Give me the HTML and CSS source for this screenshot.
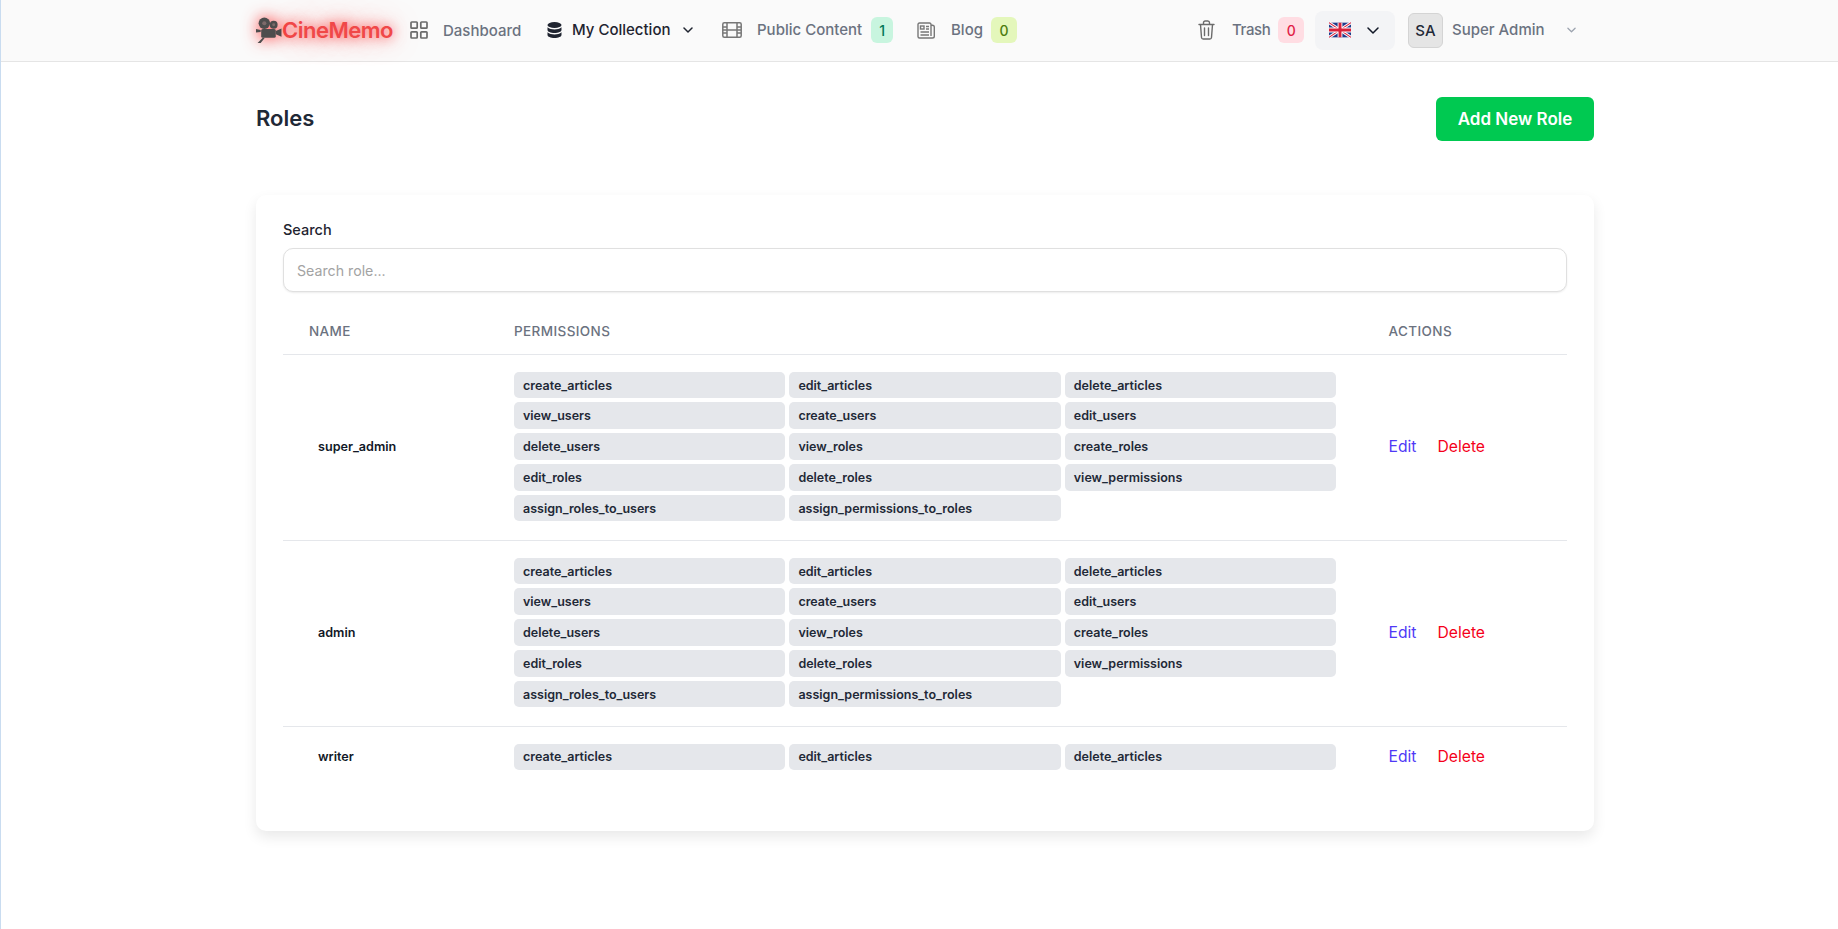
FILE: index.html
```html
<!DOCTYPE html>
<html lang="en">
<head>
<meta charset="utf-8">
<title>Roles - CineMemo</title>
<link rel="stylesheet" href="styles.css">
</head>
<body>
<header class="topbar">
  <nav class="nav">
    <a class="logo">
      <svg class="logo-icon" viewBox="0 0 25 25"><circle cx="8" cy="6" r="5.500" fill="#4d4d4d"/><circle cx="17" cy="7.500" r="3.800" fill="#4d4d4d"/><circle cx="8" cy="6" r="2" fill="#7d6a6a"/><circle cx="17" cy="7.500" r="1.400" fill="#7d6a6a"/><rect x="5" y="11.500" width="14" height="8.500" rx="1.500" fill="#4d4d4d"/><path d="M19 13.500l5.500-2.500v8l-5.500-2.500zM4.500 14.500v-2L0 11.500v3.500zM6.500 20L1.500 25h3l4-5z" fill="#4d4d4d"/></svg>
      <span class="logo-text">CineMemo</span>
    </a>
    <a class="item item-dash">
      <svg class="ic" width="18" height="18" viewBox="0 0 18 18" fill="none" stroke="#6b6b6b" stroke-width="1.700"><rect x="1" y="1" width="6.200" height="6.200" rx=".8"/><rect x="10.800" y="1" width="6.200" height="6.200" rx=".8"/><rect x="1" y="10.800" width="6.200" height="6.200" rx=".8"/><rect x="10.800" y="10.800" width="6.200" height="6.200" rx=".8"/></svg>
      <span class="lbl">Dashboard</span>
    </a>
    <a class="item item-coll">
      <svg class="ic" width="15" height="16" viewBox="0 0 15 16" fill="#1f2430"><ellipse cx="7.500" cy="3" rx="7" ry="3"/><path d="M.5 5.200C2 7 5 7.400 7.500 7.400S13 7 14.500 5.200V8c0 1.600-3.100 3-7 3s-7-1.400-7-3z"/><path d="M.5 10.200C2 12 5 12.400 7.500 12.400s5.500-.4 7-2.200V13c0 1.600-3.100 3-7 3s-7-1.400-7-3z"/></svg>
      <span class="lbl lbl-dark">My Collection</span>
      <svg class="chev-s" width="10" height="6" viewBox="0 0 10 6" fill="none" stroke="#1f2430" stroke-width="1.500" stroke-linecap="round" stroke-linejoin="round"><path d="M1 1l4 4 4-4"/></svg>
    </a>
    <a class="item item-public">
      <svg class="ic" width="20" height="16" viewBox="0 0 20 16" fill="none" stroke="#777" stroke-width="1.500"><rect x=".8" y=".8" width="18.400" height="14.400" rx="1.500"/><path d="M5 1v14M15 1v14M1 5h4M1 8h18M1 11h4M15 5h4M15 11h4"/></svg>
      <span class="lbl">Public Content</span>
      <span class="badge badge-green">1</span>
    </a>
    <a class="item item-blog">
      <svg class="ic" width="18" height="17" viewBox="0 0 18 17" fill="none" stroke="#777" stroke-width="1.400"><path d="M14 3V2.500C14 1.500 13.500 1 12.500 1h-10C1.500 1 1 1.500 1 2.500v12C1 15.500 1.500 16 2.500 16h13c1 0 1.800-.8 1.800-1.800V5c0-1-.8-2-3.300-2v11"/><rect x="3.500" y="4" width="3.500" height="3"/><path d="M9 4.500h3M9 7h3M3.500 10h8.500M3.500 13h8.500"/></svg>
      <span class="lbl">Blog</span>
      <span class="badge badge-lime">0</span>
    </a>
    <a class="item item-trash">
      <svg class="ic" width="17" height="20" viewBox="0 0 17 20" fill="none" stroke="#6b6b6b" stroke-width="1.400" stroke-linecap="round" stroke-linejoin="round"><path d="M1 4.500h15M5.500 4.500V2.800C5.500 1.800 6.200 1 7.200 1h2.600c1 0 1.700.8 1.700 1.800v1.700M2.500 4.500l1 13c.1 1 .8 1.500 1.600 1.500h6.800c.8 0 1.500-.5 1.600-1.500l1-13M6.500 8v7.500M10.500 8v7.500"/></svg>
      <span class="lbl lbl-trash">Trash</span>
      <span class="badge badge-pink">0</span>
    </a>
    <button class="lang" type="button">
      <svg width="22" height="16" viewBox="0 0 60 40"><rect width="60" height="40" fill="#1f3a8a"/><path d="M0 0l60 40M60 0L0 40" stroke="#fff" stroke-width="8"/><path d="M0 0l60 40M60 0L0 40" stroke="#d8203a" stroke-width="3"/><path d="M30 0v40M0 20h60" stroke="#fff" stroke-width="13"/><path d="M30 0v40M0 20h60" stroke="#d8203a" stroke-width="8"/></svg>
      <svg width="12" height="7" viewBox="0 0 12 7" fill="none" stroke="#111827" stroke-width="1.500" stroke-linecap="round" stroke-linejoin="round"><path d="M1 1l5 5 5-5"/></svg>
    </button>
    <a class="user">
      <span class="avatar">SA</span>
      <span class="lbl">Super Admin</span>
      <svg class="chev-user" width="9" height="6" viewBox="0 0 10 6" fill="none" stroke="#9ca3af" stroke-width="1.400" stroke-linecap="round" stroke-linejoin="round"><path d="M1 1l4 4 4-4"/></svg>
    </a>
  </nav>
</header>
<main class="page">
  <div class="page-head">
    <h1 class="title">Roles</h1>
    <button class="add" type="button">Add New Role</button>
  </div>
  <section class="card">
    <label class="search-label" for="s">Search</label>
    <input class="search" id="s" type="text" placeholder="Search role...">
    <div class="thead">
      <div class="th th-name">NAME</div>
      <div class="th">PERMISSIONS</div>
      <div class="th">ACTIONS</div>
    </div>
    <div class="row">
      <div class="name">super_admin</div>
      <div class="perms">
        <span class="chip">create_articles</span><span class="chip">edit_articles</span><span class="chip">delete_articles</span>
        <span class="chip">view_users</span><span class="chip">create_users</span><span class="chip">edit_users</span>
        <span class="chip">delete_users</span><span class="chip">view_roles</span><span class="chip">create_roles</span>
        <span class="chip">edit_roles</span><span class="chip">delete_roles</span><span class="chip">view_permissions</span>
        <span class="chip">assign_roles_to_users</span><span class="chip">assign_permissions_to_roles</span>
      </div>
      <div class="actions"><a class="edit">Edit</a><a class="del">Delete</a></div>
    </div>
    <div class="row">
      <div class="name">admin</div>
      <div class="perms">
        <span class="chip">create_articles</span><span class="chip">edit_articles</span><span class="chip">delete_articles</span>
        <span class="chip">view_users</span><span class="chip">create_users</span><span class="chip">edit_users</span>
        <span class="chip">delete_users</span><span class="chip">view_roles</span><span class="chip">create_roles</span>
        <span class="chip">edit_roles</span><span class="chip">delete_roles</span><span class="chip">view_permissions</span>
        <span class="chip">assign_roles_to_users</span><span class="chip">assign_permissions_to_roles</span>
      </div>
      <div class="actions"><a class="edit">Edit</a><a class="del">Delete</a></div>
    </div>
    <div class="row row-last">
      <div class="name">writer</div>
      <div class="perms">
        <span class="chip">create_articles</span><span class="chip">edit_articles</span><span class="chip">delete_articles</span>
      </div>
      <div class="actions"><a class="edit">Edit</a><a class="del">Delete</a></div>
    </div>
  </section>
</main>
</body>
</html>
```
FILE: styles.css
```css
* { box-sizing: border-box; }
html, body { height: 100%; }
body {
  margin: 0;
  background: #fff;
  border-left: 1px solid #c9dcf0;
  font-family: Inter, "Liberation Sans", sans-serif;
  color: #1f2937;
  overflow: hidden;
}
a { display: flex; align-items: center; }
.topbar {
  height: 62px;
  background: #fafafa;
  border-bottom: 1px solid #e5e5e5;
}
.nav {
  width: 1338px;
  margin-left: 255px;
  height: 60px;
  display: flex;
  align-items: center;
}
.logo { width: 154px; margin-top: -1px; }
.logo-icon {
  width: 26px;
  height: 26px;
  flex: none;
  filter: drop-shadow(0 0 8px rgba(255, 30, 30, 0.9));
}
.logo-text {
  font-size: 22px;
  font-weight: 600;
  letter-spacing: -0.5px;
  color: #f04848;
  text-shadow: 0 0 12px rgba(255, 40, 40, 0.8), 0 0 26px rgba(255, 60, 60, 0.6);
}
.item { flex: none; font-size: 15px; }
.ic { flex: none; }
.lbl { color: #6b7280; font-size: 15px; font-weight: 500; white-space: nowrap; margin-top: -2px; }
.lbl-dark { color: #1f2430; }
.item-dash { width: 137px; }
.item-dash .lbl { margin-left: 15px; margin-top: 0; }
.item-coll { width: 175px; }
.item-coll .lbl { margin-left: 10px; }
.chev-s { margin-left: 13px; }
.item-public { width: 195px; }
.item-public .lbl { margin-left: 15px; }
.item-blog { width: 281px; }
.item-blog .lbl { margin-left: 16px; }
.item-trash { width: 117px; }
.item-trash .lbl { margin-left: 17px; }
.lbl-trash { letter-spacing: -0.4px; }
.badge {
  margin-left: 8px;
  width: 26px;
  height: 26px;
  border-radius: 6px;
  font-size: 14px;
  font-weight: 500;
  display: flex;
  align-items: center;
  justify-content: center;
}
.badge-green { background: #c8f5df; color: #047857; width: 22px; margin-left: 9px; }
.badge-lime { background: #e4f7bb; color: #4d7c0f; }
.badge-pink { background: #ffdde3; color: #e11d48; }
.lang {
  width: 80px;
  height: 39px;
  border: 0;
  border-radius: 8px;
  background: #f3f4f6;
  padding: 0 16px 0 14px;
  display: flex;
  align-items: center;
  justify-content: space-between;
}
.user { margin-left: 13px; }
.avatar {
  width: 35px;
  height: 35px;
  border: 1px solid #d4d4d4;
  border-radius: 6px;
  background: #e5e5e5;
  color: #1f2937;
  font-size: 15px;
  font-weight: 500;
  display: flex;
  align-items: center;
  justify-content: center;
}
.user .lbl { margin-left: 9px; }
.chev-user { margin-left: 22px; }
.page { width: 1338px; margin-left: 255px; }
.page-head {
  margin-top: 35px;
  height: 44px;
  display: flex;
  align-items: center;
  justify-content: space-between;
}
.title { margin: -2px 0 0; font-size: 22px; font-weight: 600; color: #1f2937; }
.add {
  width: 158px;
  height: 44px;
  border: 0;
  border-radius: 6px;
  background: #00c951;
  color: #fff;
  font-family: inherit;
  font-size: 17px;
  font-weight: 600;
}
.card {
  margin-top: 54px;
  height: 636px;
  padding: 26px 27px 0;
  background: #fff;
  border-radius: 10px;
  box-shadow: 0 6px 14px rgba(0, 0, 0, 0.09);
}
.search-label { display: block; font-size: 14.500px; font-weight: 500; color: #1f2430; line-height: 18px; }
.search {
  display: block;
  width: 100%;
  height: 44px;
  margin-top: 9px;
  padding: 0 13px;
  border: 1px solid #e0e0e0;
  border-radius: 10px;
  box-shadow: 0 1px 2px rgba(0, 0, 0, 0.08);
  font-family: inherit;
  font-size: 14.200px;
  outline: none;
}
.search::placeholder { color: #a3a3a3; }
.thead, .row {
  display: grid;
  grid-template-columns: 231px 874.500px 1fr;
  align-items: center;
}
.thead { height: 62.500px; padding-top: 17px; border-bottom: 1px solid #e5e7eb; }
.th { font-size: 13.500px; font-weight: 500; color: #6b7280; letter-spacing: 0.4px; }
.th-name { padding-left: 26px; }
.row { padding: 17px 0 18px; height: 186px; border-bottom: 1px solid #e5e7eb; }
.row-last { height: auto; border-bottom: 0; }
.name { padding-left: 35px; margin-top: -1px; font-size: 12.600px; font-weight: 600; color: #111827; }
.perms { display: grid; grid-template-columns: repeat(3, 271.400px); gap: 4px; }
.chip {
  height: 26.750px;
  display: flex;
  align-items: center;
  padding-left: 9px;
  border-radius: 5px;
  background: #e5e7eb;
  font-size: 12.500px;
  font-weight: 600;
  color: #1f2937;
}
.actions { display: flex; gap: 21px; font-size: 15.700px; margin-top: -1px; }
.edit { color: #4f39f6; }
.del { color: #f5001a; }
```
